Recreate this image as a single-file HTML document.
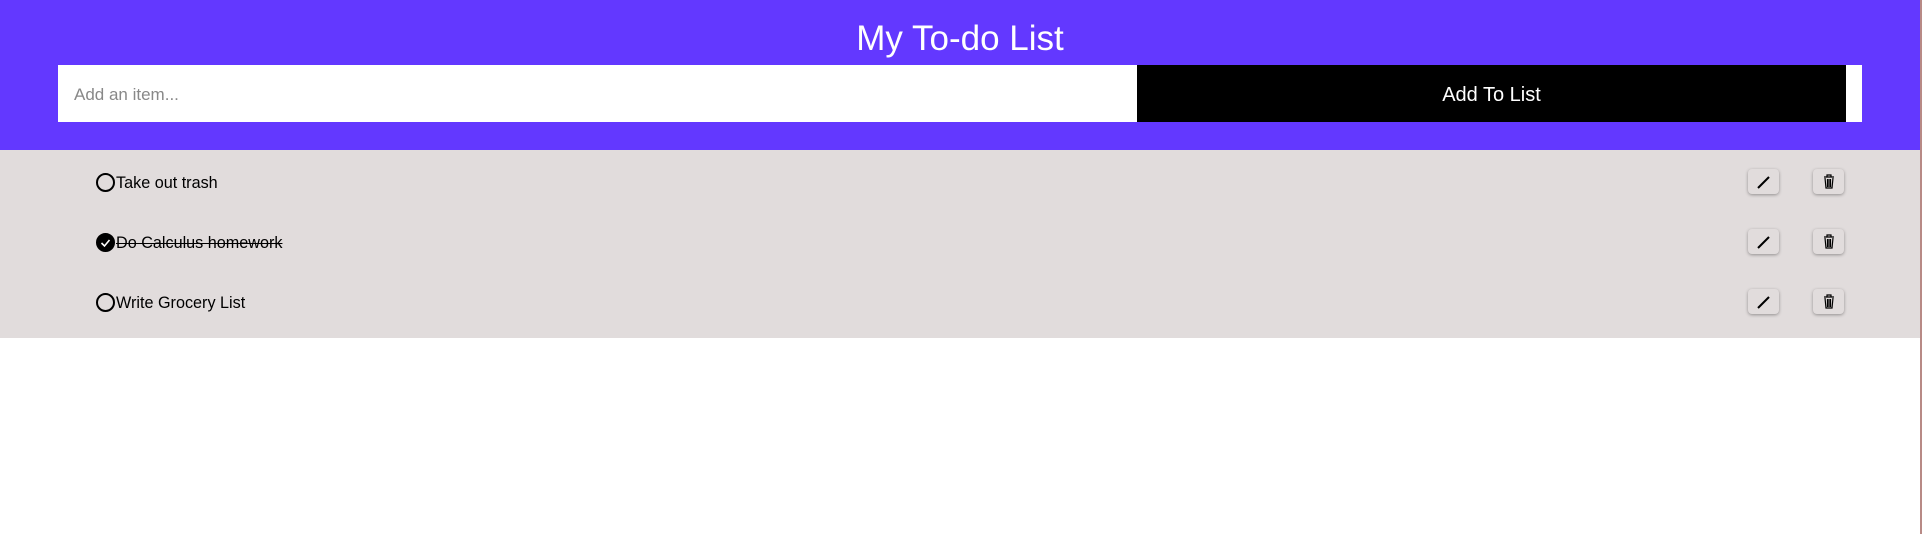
<!DOCTYPE html>
<html><head><meta charset="utf-8"><style>
*{margin:0;padding:0;box-sizing:border-box}
body{width:1922px;height:534px;background:#fff;font-family:"Liberation Sans",sans-serif;position:relative;overflow:hidden}
.hdr{position:absolute;left:0;top:0;width:1920px;height:150px;background:#6338ff}
h1{position:absolute;left:0;width:1920px;top:19px;text-align:center;color:#fff;font-weight:normal;font-size:35px}
.inp{position:absolute;left:58px;top:65px;width:1079px;height:57px;background:#fff;color:#888;font-size:17px;line-height:60px;padding-left:16px}
.btn{position:absolute;left:1137px;top:65px;width:709px;height:57px;background:#000;color:#fff;font-size:20px;line-height:61px;text-align:center}
.wb{position:absolute;left:1846px;top:65px;width:16px;height:57px;background:#fff}
.list{position:absolute;left:0;top:150px;width:1920px;height:188px;background:#e1dcdc}
.edge{position:absolute;left:1920px;top:0;width:2px;height:534px;background:#b88a86}
.row{position:absolute;left:0;width:1920px;height:30px}
.c{position:absolute;left:96px;top:5px;width:19px;height:19px;border:2px solid #000;border-radius:50%}
.c.on{background:#000}
.t{position:absolute;left:116px;top:6px;font-size:16.2px;line-height:19px;color:#000}
.s{text-decoration:line-through}
.ib{position:absolute;top:1px;width:31px;height:25px;background:#e1dcdc;border-radius:4px;box-shadow:0 1px 3px rgba(0,0,0,.35)}
</style></head><body>
<div class="hdr"><h1>My To-do List</h1>
<div class="inp">Add an item...</div><div class="btn">Add To List</div><div class="wb"></div></div>
<div class="list"></div>
<div class="edge"></div>
<div class="row" style="top:168px"><div class="c"></div><div class="t">Take out trash</div>
<div class="ib" style="left:1748px"><svg width="31" height="25"><path d="M10 19L21 8" stroke="#000" stroke-width="2"/></svg></div>
<div class="ib" style="left:1813px"><svg width="31" height="25"><path d="M11 8h10M14 8V6h4v2M12 9l1 10h6l1-10M14.5 10v8M16 10v8M17.5 10v8" stroke="#000" stroke-width="1.2" fill="none"/></svg></div></div>
<div class="row" style="top:228px"><div class="c on"><svg width="15" height="15" style="position:absolute;left:0;top:0"><path d="M3.5 8l3 3 5-6" stroke="#fff" stroke-width="1.6" fill="none"/></svg></div><div class="t s">Do Calculus homework</div>
<div class="ib" style="left:1748px"><svg width="31" height="25"><path d="M10 19L21 8" stroke="#000" stroke-width="2"/></svg></div>
<div class="ib" style="left:1813px"><svg width="31" height="25"><path d="M11 8h10M14 8V6h4v2M12 9l1 10h6l1-10M14.5 10v8M16 10v8M17.5 10v8" stroke="#000" stroke-width="1.2" fill="none"/></svg></div></div>
<div class="row" style="top:288px"><div class="c"></div><div class="t">Write Grocery List</div>
<div class="ib" style="left:1748px"><svg width="31" height="25"><path d="M10 19L21 8" stroke="#000" stroke-width="2"/></svg></div>
<div class="ib" style="left:1813px"><svg width="31" height="25"><path d="M11 8h10M14 8V6h4v2M12 9l1 10h6l1-10M14.5 10v8M16 10v8M17.5 10v8" stroke="#000" stroke-width="1.2" fill="none"/></svg></div></div>
</body></html>
